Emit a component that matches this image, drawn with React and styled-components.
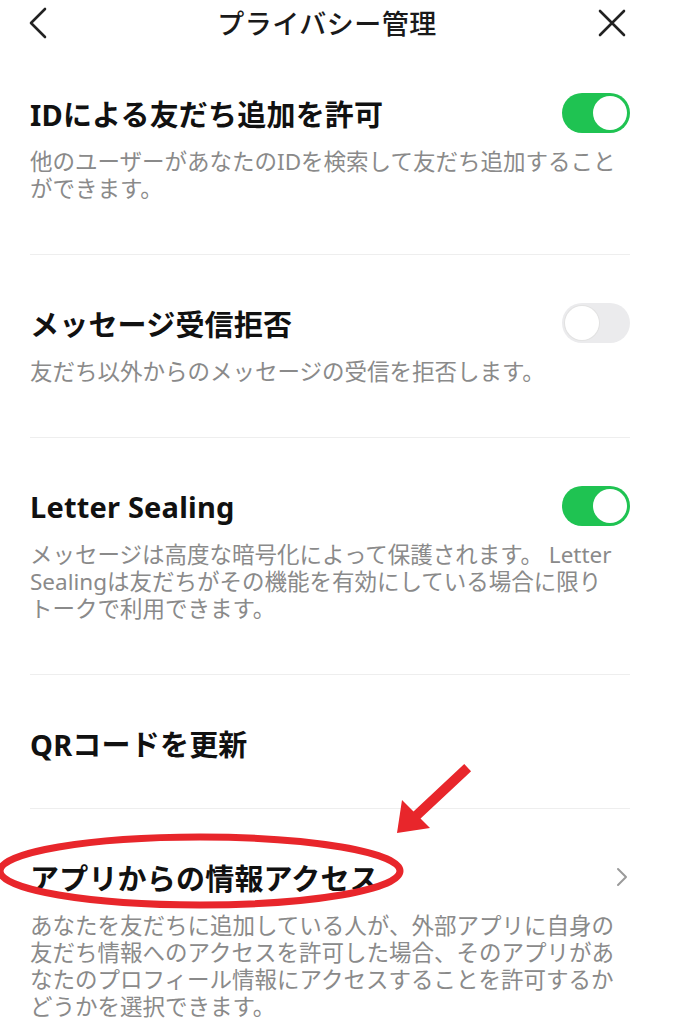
import React from 'react'
import styled, { createGlobalStyle } from 'styled-components'

const GlobalStyle = createGlobalStyle`
  html, body {
    margin: 0;
    padding: 0;
    background: #fff;
  }
  body {
    font-family: "Noto Sans", "Noto Sans CJK JP", sans-serif;
    -webkit-font-smoothing: antialiased;
  }
`

const Page = styled.div`
  position: relative;
  width: 690px;
  min-height: 1024px;
  background: #fff;
  overflow: hidden;
`

const Header = styled.div`
  height: 45px;
  display: flex;
  align-items: center;
  justify-content: space-between;
  padding: 0 64px 0 28px;
`

const HeaderTitle = styled.div`
  font-size: 27px;
  font-weight: 500;
  color: #1a1a1a;
  letter-spacing: 0.5px;
`

const IconBtn = styled.div`
  width: 32px;
  height: 32px;
  display: flex;
  align-items: center;
  justify-content: ${p => (p.$right ? 'flex-end' : 'flex-start')};
`

const List = styled.div`
  padding: 0 60px 0 30px;
`

const Section = styled.div`
  padding-top: 48px;
  padding-bottom: ${p => (p.$last ? '10px' : p.$plain ? '45px' : '52px')};
  border-bottom: ${p => (p.$last ? 'none' : '1.5px solid #eeeeee')};
`

const TitleRow = styled.div`
  display: flex;
  align-items: center;
  justify-content: space-between;
  height: 40px;
`

const Title = styled.div`
  font-size: 29px;
  font-weight: 700;
  color: #111;
  letter-spacing: 0.2px;
`

const Desc = styled.div`
  margin-top: 15px;
  font-size: 22.5px;
  line-height: 27px;
  color: #8a8a8a;
  white-space: nowrap;
`

const Track = styled.div`
  width: 68px;
  height: 40px;
  border-radius: 20px;
  box-sizing: border-box;
  background: ${p => (p.$on ? '#1fc352' : '#ebebed')};
  padding: 3px;
  display: flex;
  justify-content: ${p => (p.$on ? 'flex-end' : 'flex-start')};
`

const Knob = styled.div`
  width: 34px;
  height: 34px;
  border-radius: 50%;
  background: #fff;
  box-shadow: ${p => (p.$on ? 'none' : '0 0 0 1px #e2e2e2')};
`

const Chevron = styled.div`
  display: flex;
  align-items: center;
  padding-right: 2px;
`

const Annotation = styled.svg`
  position: absolute;
  left: 0;
  top: 0;
  pointer-events: none;
`

const Toggle = ({ on }) => (
  <Track $on={on}>
    <Knob $on={on} />
  </Track>
)

const sections = [
  {
    title: 'IDによる友だち追加を許可',
    toggle: true,
    desc: ['他のユーザーがあなたのIDを検索して友だち追加すること', 'ができます。'],
  },
  {
    title: 'メッセージ受信拒否',
    toggle: false,
    desc: ['友だち以外からのメッセージの受信を拒否します。'],
  },
  {
    title: 'Letter Sealing',
    toggle: true,
    desc: [
      'メッセージは高度な暗号化によって保護されます。 Letter',
      'Sealingは友だちがその機能を有効にしている場合に限り',
      'トークで利用できます。',
    ],
  },
  { title: 'QRコードを更新' },
  {
    title: 'アプリからの情報アクセス',
    chevron: true,
    desc: [
      'あなたを友だちに追加している人が、外部アプリに自身の',
      '友だち情報へのアクセスを許可した場合、そのアプリがあ',
      'なたのプロフィール情報にアクセスすることを許可するか',
      'どうかを選択できます。',
    ],
  },
]

export default function App() {
  return (
    <Page>
      <GlobalStyle />
      <Header>
        <IconBtn>
          <svg width="20" height="32" viewBox="0 0 20 32">
            <polyline points="17,2 3,16 17,30" fill="none" stroke="#222" strokeWidth="2.6" strokeLinejoin="round" strokeLinecap="round" />
          </svg>
        </IconBtn>
        <HeaderTitle>プライバシー管理</HeaderTitle>
        <IconBtn $right>
          <svg width="28" height="28" viewBox="0 0 28 28">
            <path d="M2 2 L26 26 M26 2 L2 26" stroke="#222" strokeWidth="2.6" strokeLinecap="round" />
          </svg>
        </IconBtn>
      </Header>

      <List>
        {sections.map((s, i) => (
          <Section key={s.title} $last={i === sections.length - 1} $plain={!s.desc}>
            <TitleRow>
              <Title>{s.title}</Title>
              {s.toggle !== undefined && <Toggle on={s.toggle} />}
              {s.chevron && (
                <Chevron>
                  <svg width="12" height="20" viewBox="0 0 12 20">
                    <polyline points="2,2 10,10 2,18" fill="none" stroke="#9a9a9a" strokeWidth="2" strokeLinecap="round" strokeLinejoin="round" />
                  </svg>
                </Chevron>
              )}
            </TitleRow>
            {s.desc && (
              <Desc>
                {s.desc.map((line, j) => (
                  <div key={j}>{line}</div>
                ))}
              </Desc>
            )}
          </Section>
        ))}
      </List>

      {/* red annotation: arrow + ellipse */}
      <Annotation width="690" height="1024" viewBox="0 0 690 1024">
        <line x1="464" y1="771" x2="416" y2="816" stroke="#e8262b" strokeWidth="10" strokeLinecap="square" />
        <polygon points="397,833 402,800 430,828" fill="#e8262b" />
        <ellipse cx="200" cy="871" rx="200" ry="34" fill="none" stroke="#e8262b" strokeWidth="7" />
      </Annotation>
    </Page>
  )
}
